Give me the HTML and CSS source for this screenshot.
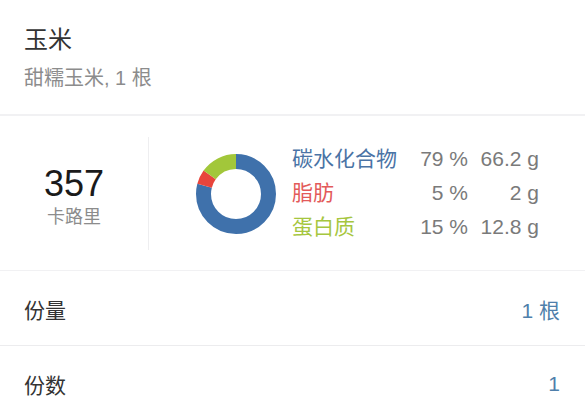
FILE: index.html
```html
<!DOCTYPE html>
<html lang="zh">
<head>
  <meta charset="UTF-8" />
  <title>玉米 - 营养信息</title>
  <meta name="viewport" content="width=device-width, initial-scale=1.0" />
  <link rel="stylesheet" href="styles.css">
</head>
<body>
  <div class="food-header">
    <h1 class="food-name">玉米</h1>
    <p class="food-desc">甜糯玉米, 1 根</p>
  </div>

  <div class="nutrition">
    <div class="calories">
      <div class="cal-num">357</div>
      <div class="cal-unit">卡路里</div>
    </div>
    <div class="macros">
      <svg class="donut" width="82" height="82" viewBox="0 0 82 82">
        <g transform="rotate(-90 41 41)">
          <circle cx="41" cy="41" r="32.5" fill="none" stroke="#3f71ab" stroke-width="15"
                  stroke-dasharray="161.3 204.2" stroke-dashoffset="0" />
          <circle cx="41" cy="41" r="32.5" fill="none" stroke="#e8453c" stroke-width="15"
                  stroke-dasharray="11.9 204.2" stroke-dashoffset="-161.3" />
          <circle cx="41" cy="41" r="32.5" fill="none" stroke="#a2c73a" stroke-width="15"
                  stroke-dasharray="31 204.2" stroke-dashoffset="-173.2" />
        </g>
      </svg>
      <table class="macro-table">
        <tr class="carb">
          <td class="m-name">碳水化合物</td>
          <td class="m-pct">79 %</td>
          <td class="m-g">66.2 g</td>
        </tr>
        <tr class="fat">
          <td class="m-name">脂肪</td>
          <td class="m-pct">5 %</td>
          <td class="m-g">2 g</td>
        </tr>
        <tr class="protein">
          <td class="m-name">蛋白质</td>
          <td class="m-pct">15 %</td>
          <td class="m-g">12.8 g</td>
        </tr>
      </table>
    </div>
  </div>

  <div class="row">
    <span class="row-label">份量</span>
    <span class="row-value">1 根</span>
  </div>
  <div class="row">
    <span class="row-label">份数</span>
    <span class="row-value">1</span>
  </div>
</body>
</html>
```

FILE: styles.css
```css
body {
  margin: 0;
  background: #fff;
  font-family: 'Liberation Sans', 'Noto Sans CJK SC', sans-serif;
  color: #333;
}
.food-header {
  padding: 24px 24px 0;
  height: 90px;
  border-bottom: 2px solid #f1f1f3;
}
.food-name {
  margin: 0;
  font-size: 24px;
  font-weight: normal;
  line-height: 32px;
  color: #333;
}
.food-desc {
  margin: 10px 0 0;
  font-size: 20px;
  line-height: 24px;
  color: #8c8c8c;
}
.nutrition {
  display: flex;
  align-items: center;
  height: 154px;
  border-bottom: 1px solid #f1f1f3;
}
.calories {
  width: 149px;
  height: 113px;
  border-right: 1px solid #eeeef0;
  display: flex;
  flex-direction: column;
  justify-content: center;
  align-items: center;
  box-sizing: border-box;
  padding-top: 6px;
}
.cal-num {
  font-size: 36px;
  line-height: 38px;
  color: #1a1a1a;
}
.cal-unit {
  margin-top: 3px;
  font-size: 18px;
  line-height: 22px;
  color: #8c8c8c;
}
.macros {
  display: flex;
  align-items: center;
  padding-left: 46px;
}
.donut {
  display: block;
  margin-top: 2px;
}
.macro-table {
  margin-left: 15px;
  border-collapse: collapse;
  font-size: 21px;
}
.macro-table td {
  padding: 0;
  height: 34px;
  line-height: 34px;
}
.m-name {
  width: 120px;
}
.m-pct,
.m-g {
  text-align: right;
  color: #7a7a7a;
}
.m-pct {
  width: 56px;
}
.m-g {
  width: 71px;
}
.carb .m-name {
  color: #4a73a5;
}
.fat .m-name {
  color: #e35a5a;
}
.protein .m-name {
  color: #a6c63f;
}
.row {
  display: flex;
  justify-content: space-between;
  align-items: center;
  height: 75px;
  padding: 2px 25px 0 24px;
  box-sizing: border-box;
  border-bottom: 1px solid #ececee;
  font-size: 21px;
}
.row-label {
  color: #333;
}
.row-value {
  color: #4f7fab;
}
```
